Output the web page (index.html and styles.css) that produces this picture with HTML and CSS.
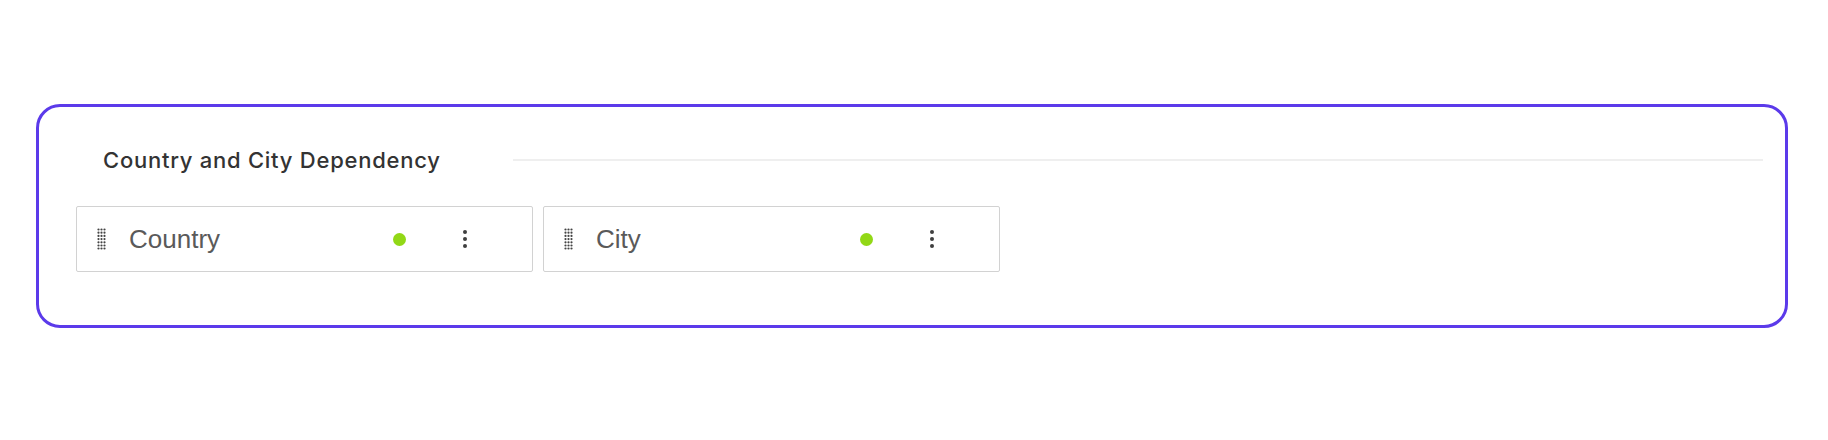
FILE: index.html
```html
<!DOCTYPE html>
<html lang="en">
<head>
<meta charset="utf-8">
<title>Country and City Dependency</title>
<link rel="stylesheet" href="styles.css">
</head>
<body>
<main class="page">
  <section class="card">
    <header class="card-head">
      <h2 class="card-title">Country and City Dependency</h2>
      <div class="divider"></div>
    </header>
    <div class="fields">
      <div class="field">
        <svg class="handle" width="9" height="22" viewBox="0 0 9 22" aria-hidden="true">
          <g fill="#444">
            <circle cx="1.5" cy="1.5" r="1.1"/><circle cx="4.5" cy="1.5" r="1.1"/><circle cx="7.5" cy="1.5" r="1.1"/>
            <circle cx="1.5" cy="4.7" r="1.1"/><circle cx="4.5" cy="4.7" r="1.1"/><circle cx="7.5" cy="4.7" r="1.1"/>
            <circle cx="1.5" cy="7.9" r="1.1"/><circle cx="4.5" cy="7.9" r="1.1"/><circle cx="7.5" cy="7.9" r="1.1"/>
            <circle cx="1.5" cy="11.1" r="1.1"/><circle cx="4.5" cy="11.1" r="1.1"/><circle cx="7.5" cy="11.1" r="1.1"/>
            <circle cx="1.5" cy="14.3" r="1.1"/><circle cx="4.5" cy="14.3" r="1.1"/><circle cx="7.5" cy="14.3" r="1.1"/>
            <circle cx="1.5" cy="17.5" r="1.1"/><circle cx="4.5" cy="17.5" r="1.1"/><circle cx="7.5" cy="17.5" r="1.1"/>
            <circle cx="1.5" cy="20.5" r="1.1"/><circle cx="4.5" cy="20.5" r="1.1"/><circle cx="7.5" cy="20.5" r="1.1"/>
          </g>
        </svg>
        <span class="field-label">Country</span>
        <span class="status"></span>
        <span class="kebab"><i></i><i></i><i></i></span>
      </div>
      <div class="field">
        <svg class="handle" width="9" height="22" viewBox="0 0 9 22" aria-hidden="true">
          <g fill="#444">
            <circle cx="1.5" cy="1.5" r="1.1"/><circle cx="4.5" cy="1.5" r="1.1"/><circle cx="7.5" cy="1.5" r="1.1"/>
            <circle cx="1.5" cy="4.7" r="1.1"/><circle cx="4.5" cy="4.7" r="1.1"/><circle cx="7.5" cy="4.7" r="1.1"/>
            <circle cx="1.5" cy="7.9" r="1.1"/><circle cx="4.5" cy="7.9" r="1.1"/><circle cx="7.5" cy="7.9" r="1.1"/>
            <circle cx="1.5" cy="11.1" r="1.1"/><circle cx="4.5" cy="11.1" r="1.1"/><circle cx="7.5" cy="11.1" r="1.1"/>
            <circle cx="1.5" cy="14.3" r="1.1"/><circle cx="4.5" cy="14.3" r="1.1"/><circle cx="7.5" cy="14.3" r="1.1"/>
            <circle cx="1.5" cy="17.5" r="1.1"/><circle cx="4.5" cy="17.5" r="1.1"/><circle cx="7.5" cy="17.5" r="1.1"/>
            <circle cx="1.5" cy="20.5" r="1.1"/><circle cx="4.5" cy="20.5" r="1.1"/><circle cx="7.5" cy="20.5" r="1.1"/>
          </g>
        </svg>
        <span class="field-label">City</span>
        <span class="status"></span>
        <span class="kebab"><i></i><i></i><i></i></span>
      </div>
    </div>
  </section>
</main>
</body>
</html>
```

FILE: styles.css
```css
* { box-sizing: border-box; }

html, body {
  margin: 0;
  padding: 0;
  background: #ffffff;
}

.page {
  padding: 104px 40px 0 36px;
}

.card {
  width: 1752px;
  height: 224px;
  border: 3px solid #5b3aea;
  border-radius: 24px;
  padding: 34px 22px 0 37px;
}

.card-head {
  display: flex;
  align-items: center;
  height: 38px;
  padding-left: 27px;
}

.card-title {
  margin: 0;
  font-family: Inter, "Liberation Sans", sans-serif;
  font-weight: 500;
  font-size: 22px;
  letter-spacing: 0.75px;
  line-height: 26px;
  color: #333333;
  white-space: nowrap;
}

.divider {
  flex: 1;
  height: 2px;
  margin-left: 72px;
  background: #efefef;
}

.fields {
  display: flex;
  gap: 10px;
  margin-top: 27px;
}

.field {
  display: flex;
  align-items: center;
  width: 457px;
  height: 66px;
  border: 1px solid #d2d2d2;
  border-radius: 2px;
  padding: 0 65px 0 20px;
}

.handle {
  flex: none;
  display: block;
}

.field-label {
  flex: 1;
  margin-left: 23px;
  font-family: "Liberation Sans", Arial, sans-serif;
  font-size: 26px;
  color: #5a5a5a;
  line-height: 30px;
}

.status {
  flex: none;
  width: 13px;
  height: 13px;
  border-radius: 50%;
  background: #92d816;
}

.kebab {
  flex: none;
  display: flex;
  flex-direction: column;
  gap: 3px;
  margin-left: 57px;
}

.kebab i {
  display: block;
  width: 4px;
  height: 4px;
  border-radius: 50%;
  background: #3f3f3f;
}
```
